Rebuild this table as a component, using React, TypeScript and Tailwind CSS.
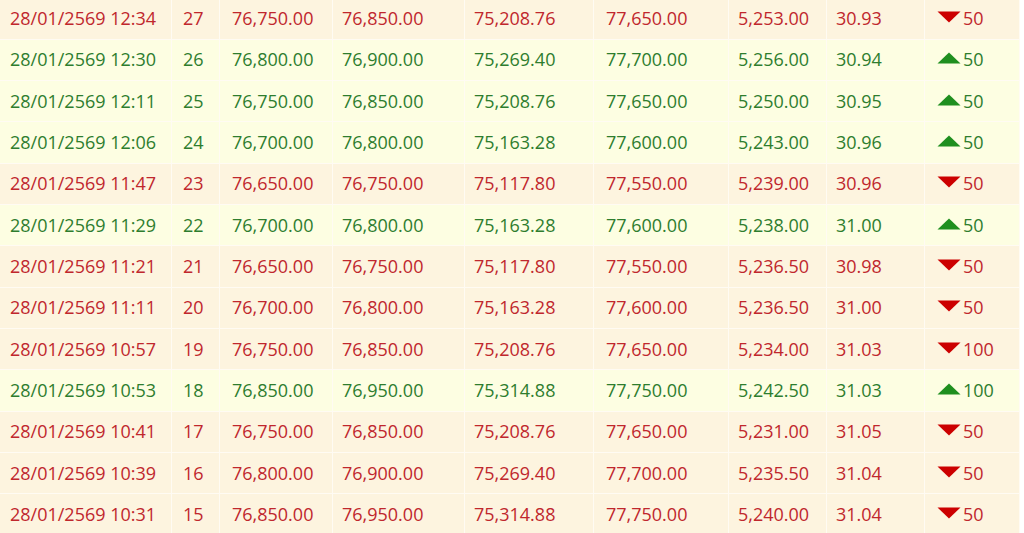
type Row = {
  time: string;
  no: string;
  bid: string;
  ask: string;
  buyTax: string;
  sellTax: string;
  spot: string;
  fx: string;
  up: boolean;
  change: string;
};

const rows: Row[] = [
  { time: "12:34", no: "27", bid: "76,750.00", ask: "76,850.00", buyTax: "75,208.76", sellTax: "77,650.00", spot: "5,253.00", fx: "30.93", up: false, change: "50" },
  { time: "12:30", no: "26", bid: "76,800.00", ask: "76,900.00", buyTax: "75,269.40", sellTax: "77,700.00", spot: "5,256.00", fx: "30.94", up: true, change: "50" },
  { time: "12:11", no: "25", bid: "76,750.00", ask: "76,850.00", buyTax: "75,208.76", sellTax: "77,650.00", spot: "5,250.00", fx: "30.95", up: true, change: "50" },
  { time: "12:06", no: "24", bid: "76,700.00", ask: "76,800.00", buyTax: "75,163.28", sellTax: "77,600.00", spot: "5,243.00", fx: "30.96", up: true, change: "50" },
  { time: "11:47", no: "23", bid: "76,650.00", ask: "76,750.00", buyTax: "75,117.80", sellTax: "77,550.00", spot: "5,239.00", fx: "30.96", up: false, change: "50" },
  { time: "11:29", no: "22", bid: "76,700.00", ask: "76,800.00", buyTax: "75,163.28", sellTax: "77,600.00", spot: "5,238.00", fx: "31.00", up: true, change: "50" },
  { time: "11:21", no: "21", bid: "76,650.00", ask: "76,750.00", buyTax: "75,117.80", sellTax: "77,550.00", spot: "5,236.50", fx: "30.98", up: false, change: "50" },
  { time: "11:11", no: "20", bid: "76,700.00", ask: "76,800.00", buyTax: "75,163.28", sellTax: "77,600.00", spot: "5,236.50", fx: "31.00", up: false, change: "50" },
  { time: "10:57", no: "19", bid: "76,750.00", ask: "76,850.00", buyTax: "75,208.76", sellTax: "77,650.00", spot: "5,234.00", fx: "31.03", up: false, change: "100" },
  { time: "10:53", no: "18", bid: "76,850.00", ask: "76,950.00", buyTax: "75,314.88", sellTax: "77,750.00", spot: "5,242.50", fx: "31.03", up: true, change: "100" },
  { time: "10:41", no: "17", bid: "76,750.00", ask: "76,850.00", buyTax: "75,208.76", sellTax: "77,650.00", spot: "5,231.00", fx: "31.05", up: false, change: "50" },
  { time: "10:39", no: "16", bid: "76,800.00", ask: "76,900.00", buyTax: "75,269.40", sellTax: "77,700.00", spot: "5,235.50", fx: "31.04", up: false, change: "50" },
  { time: "10:31", no: "15", bid: "76,850.00", ask: "76,950.00", buyTax: "75,314.88", sellTax: "77,750.00", spot: "5,240.00", fx: "31.04", up: false, change: "50" },
];

function Arrow({ up }: { up: boolean }) {
  return (
    <svg width="24" height="12" viewBox="0 0 24 12" className="shrink-0 -mt-[3px]">
      {up ? (
        <polygon points="12,0.5 23.5,11.5 0.5,11.5" fill="#1f8f1f" />
      ) : (
        <polygon points="0.5,0.5 23.5,0.5 12,11.5" fill="#cc0000" />
      )}
    </svg>
  );
}

function Cell({ children, className }: { children: React.ReactNode; className?: string }) {
  return (
    <div className={"flex items-center border-r border-[#fffbf3] " + (className ?? "")}>
      {children}
    </div>
  );
}

export default function App() {
  return (
    <div className="w-[1024px] h-[533px] overflow-hidden bg-white" style={{ fontFamily: '"Open Sans", "Noto Sans", sans-serif' }}>
      <div className="w-[1020px] -mt-[1.5px] text-[18px]">
        {rows.map((r, i) => (
          <div
            key={i}
            className={
              "grid grid-cols-[172px_48px_113px_132px_129px_135px_98px_98px_95px] h-[41.33px] border-b border-[#fffbf3] " +
              (r.up ? "bg-[#fdfee2] text-[#2e7d2e]" : "bg-[#fdf4df] text-[#c0272d]")
            }
          >
            <Cell className="pl-[10px]">28/01/2569 {r.time}</Cell>
            <Cell className="pl-[11px]">{r.no}</Cell>
            <Cell className="pl-[12px]">{r.bid}</Cell>
            <Cell className="pl-[9px]">{r.ask}</Cell>
            <Cell className="pl-[9px]">{r.buyTax}</Cell>
            <Cell className="pl-[12px]">{r.sellTax}</Cell>
            <Cell className="pl-[9px]">{r.spot}</Cell>
            <Cell className="pl-[9px]">{r.fx}</Cell>
            <Cell className="pl-[12px] gap-[2px]">
              <Arrow up={r.up} />
              <span>{r.change}</span>
            </Cell>
          </div>
        ))}
      </div>
    </div>
  );
}
